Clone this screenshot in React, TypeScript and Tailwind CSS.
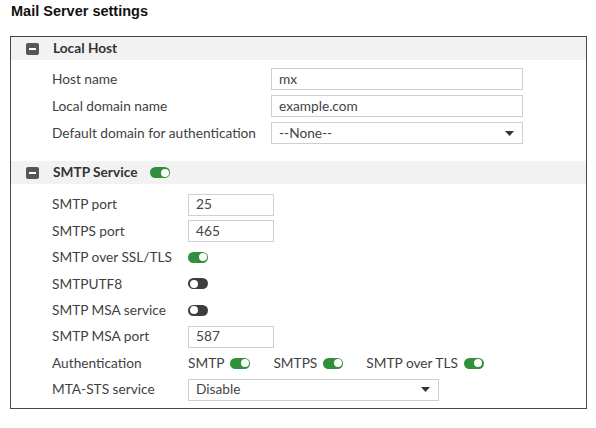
import React from "react";

const font = { fontFamily: "Lato, 'Open Sans', sans-serif" };

function Minus() {
  return (
    <span className="flex h-[12px] w-[13px] items-center justify-center rounded-[2px] bg-[#565656]">
      <span className="h-[2px] w-[7px] bg-white" />
    </span>
  );
}

function Toggle({ on }: { on: boolean }) {
  return on ? (
    <span className="relative inline-block h-[11px] w-[20px] rounded-full bg-[#2f8f3a]">
      <span className="absolute right-[1.5px] top-[1.5px] h-[8px] w-[8px] rounded-full bg-white" />
    </span>
  ) : (
    <span className="relative inline-block h-[11px] w-[20px] rounded-full bg-[#3d3d3d]">
      <span className="absolute left-[1.5px] top-[1.5px] h-[8px] w-[8px] rounded-full bg-white" />
    </span>
  );
}

function Header({ title, toggle }: { title: string; toggle?: boolean }) {
  return (
    <div className="flex h-[23px] items-center bg-[#f2f2f2] pl-[15px]">
      <Minus />
      <span className="ml-[14px] text-[13.7px] font-bold text-[#333]">{title}</span>
      {toggle && (
        <span className="ml-[13px] flex">
          <Toggle on />
        </span>
      )}
    </div>
  );
}

function TextBox({ value, w }: { value: string; w: string }) {
  return (
    <div className={`flex h-[22px] items-center border border-[#cfcfcf] bg-white pl-[7px] text-[13.7px] text-[#444] ${w}`}>
      {value}
    </div>
  );
}

function SelectBox({ value, w }: { value: string; w: string }) {
  return (
    <div className={`flex h-[22px] items-center justify-between border border-[#cfcfcf] bg-white pl-[7px] pr-[8px] text-[13.7px] text-[#444] ${w}`}>
      <span>{value}</span>
      <svg width="9" height="5" viewBox="0 0 9 5">
        <path d="M0 0h9L4.5 5z" fill="#333" />
      </svg>
    </div>
  );
}

export default function App() {
  return (
    <div className="h-[428px] w-[596px] bg-white" style={font}>
      <div
        className="pl-[11px] pt-[3px] text-[14.5px] font-bold leading-[17px] text-[#111]"
        style={{ fontFamily: "'Liberation Sans', Arial, sans-serif" }}
      >
        Mail Server settings
      </div>
      <div className="ml-[10px] mt-[16px] h-[373px] w-[577px] border border-[#474747] bg-white">
        <Header title="Local Host" />
        <div className="flex flex-col gap-[5px] pl-[41px] pt-[8px] text-[13.7px] text-[#3f3f3f]">
          <div className="flex h-[22px] items-center">
            <span className="w-[219px]">Host name</span>
            <TextBox value="mx" w="w-[252px]" />
          </div>
          <div className="flex h-[22px] items-center">
            <span className="w-[219px]">Local domain name</span>
            <TextBox value="example.com" w="w-[252px]" />
          </div>
          <div className="flex h-[22px] items-center">
            <span className="w-[219px]">Default domain for authentication</span>
            <SelectBox value="--None--" w="w-[252px]" />
          </div>
        </div>
        <div className="mt-[17px]">
          <Header title="SMTP Service" toggle />
        </div>
        <div className="flex flex-col gap-[4.45px] pl-[41px] pt-[9.5px] text-[13.7px] text-[#3f3f3f]">
          <div className="flex h-[22px] items-center">
            <span className="w-[136px]">SMTP port</span>
            <TextBox value="25" w="w-[86px]" />
          </div>
          <div className="flex h-[22px] items-center">
            <span className="w-[136px]">SMTPS port</span>
            <TextBox value="465" w="w-[86px]" />
          </div>
          <div className="flex h-[22px] items-center">
            <span className="w-[136px]">SMTP over SSL/TLS</span>
            <Toggle on />
          </div>
          <div className="flex h-[22px] items-center">
            <span className="w-[136px]">SMTPUTF8</span>
            <Toggle on={false} />
          </div>
          <div className="flex h-[22px] items-center">
            <span className="w-[136px]">SMTP MSA service</span>
            <Toggle on={false} />
          </div>
          <div className="flex h-[22px] items-center">
            <span className="w-[136px]">SMTP MSA port</span>
            <TextBox value="587" w="w-[86px]" />
          </div>
          <div className="flex h-[22px] items-center">
            <span className="w-[136px]">Authentication</span>
            <span className="flex items-center gap-[6px]">
              SMTP <Toggle on />
            </span>
            <span className="ml-[23px] flex items-center gap-[6px]">
              SMTPS <Toggle on />
            </span>
            <span className="ml-[23px] flex items-center gap-[6px]">
              SMTP over TLS <Toggle on />
            </span>
          </div>
          <div className="flex h-[22px] items-center">
            <span className="w-[136px]">MTA-STS service</span>
            <SelectBox value="Disable" w="w-[251px]" />
          </div>
        </div>
      </div>
    </div>
  );
}
